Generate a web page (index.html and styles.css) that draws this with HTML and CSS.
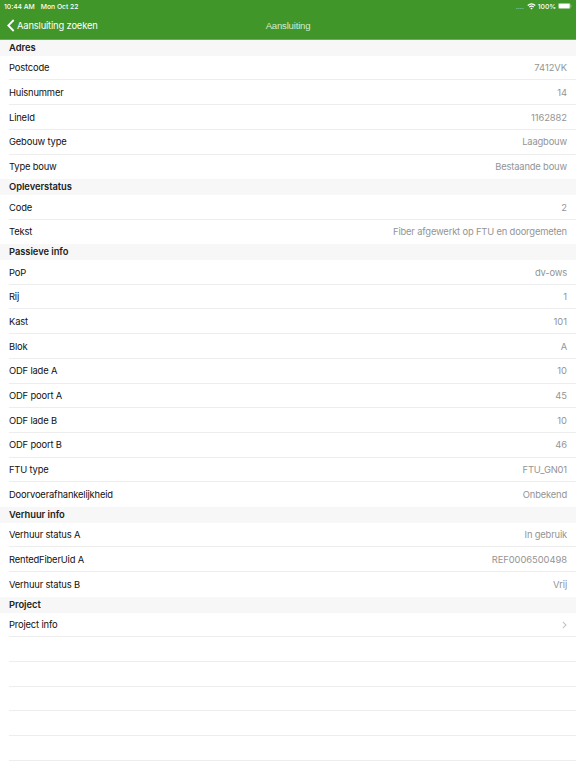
FILE: index.html
```html
<!DOCTYPE html>
<html lang="nl"><head><meta charset="utf-8"><title>Aansluiting</title><link rel="stylesheet" href="styles.css"></head>
<body>
<header class="top">
<div class="status"><span class="time">10:44 AM</span><span class="date">Mon Oct 22</span><span class="dots">....</span>
<svg class="wifi" viewBox="0 0 9 7"><path d="M.7 2.5Q4.500-.9 8.300 2.500M2.200 4.100Q4.500 2.100 6.800 4.100" fill="none" stroke="#fff" stroke-width="1.200"/><path d="M3.300 5.200Q4.500 4.200 5.700 5.200L4.500 6.500z" fill="#fff"/></svg>
<span class="pct">100%</span><svg class="battery" viewBox="0 0 14 6"><rect x=".3" y=".3" width="11.900" height="5.400" rx="1.300" fill="none" stroke="#b9dcae" stroke-width=".6"/><rect x=".8" y=".7" width="10.900" height="4.600" rx=".8" fill="#fff"/><path d="M13 2q1 1 0 2z" fill="#b9dcae"/></svg></div>
<nav class="nav"><svg class="back" viewBox="0 0 8 13"><path d="M6.700 1L1.300 6.500L6.700 12" fill="none" stroke="#fff" stroke-width="1.800"/></svg><span class="back-label">Aansluiting zoeken</span><h1>Aansluiting</h1></nav>
</header>
<main>
<h2>Adres</h2>
<div class="row"><span>Postcode</span><b class="num">7412VK</b></div>
<div class="row"><span>Huisnummer</span><b class="num">14</b></div>
<div class="row"><span>LineId</span><b class="num">1162882</b></div>
<div class="row"><span>Gebouw type</span><b>Laagbouw</b></div>
<div class="row last"><span>Type bouw</span><b>Bestaande bouw</b></div>
<h2>Opleverstatus</h2>
<div class="row"><span>Code</span><b class="num">2</b></div>
<div class="row last"><span>Tekst</span><b>Fiber afgewerkt op FTU en doorgemeten</b></div>
<h2>Passieve info</h2>
<div class="row"><span>PoP</span><b>dv-ows</b></div>
<div class="row"><span>Rij</span><b class="num">1</b></div>
<div class="row"><span>Kast</span><b class="num">101</b></div>
<div class="row"><span>Blok</span><b>A</b></div>
<div class="row"><span>ODF lade A</span><b class="num">10</b></div>
<div class="row"><span>ODF poort A</span><b class="num">45</b></div>
<div class="row"><span>ODF lade B</span><b class="num">10</b></div>
<div class="row"><span>ODF poort B</span><b class="num">46</b></div>
<div class="row"><span>FTU type</span><b>FTU_GN01</b></div>
<div class="row last"><span>Doorvoerafhankelijkheid</span><b>Onbekend</b></div>
<h2>Verhuur info</h2>
<div class="row"><span>Verhuur status A</span><b>In gebruik</b></div>
<div class="row"><span>RentedFiberUid A</span><b class="num">REF0006500498</b></div>
<div class="row last"><span>Verhuur status B</span><b>Vrij</b></div>
<h2>Project</h2>
<div class="row"><span>Project info</span><svg class="chev" viewBox="0 0 5 8"><path d="M.8.8L4 4L.8 7.200" fill="none" stroke="#c4c4c8" stroke-width="1.100"/></svg></div>
<div class="row"></div><div class="row"></div><div class="row"></div><div class="row"></div><div class="row"></div><div class="row"></div>
</main></body></html>
```
FILE: styles.css
```css
* { box-sizing: border-box; }
body { margin: 0; height: 768px; overflow: hidden; background: #fff; color: #111; font-family: Inter, "Liberation Sans", sans-serif; font-size: 9.4px; letter-spacing: -.17px; }
.top { height: 40px; border-bottom: 1px solid #68af55; background: #409629; color: #fff; }
.status { display: flex; align-items: center; height: 12px; padding: 0 4px; font-size: 6.8px; font-weight: 500; letter-spacing: -.03px; }
.date { margin-left: 6px; }
.dots { margin-left: auto; opacity: .5; }
.wifi { width: 9px; height: 7px; margin: 0 2px 0 3px; }
.battery { width: 14px; height: 6px; margin-left: 2px; }
.nav { display: grid; grid-template-columns: 9px 1fr auto 9px 1fr; align-items: center; height: 27px; padding: 0 7px; }
.back { width: 8px; height: 13px; }
.back-label { padding-left: 1px; font-size: 9.4px; }
h1 { margin: 0; font-family: "Liberation Sans", sans-serif; font-size: 9.6px; font-weight: 400; letter-spacing: -.2px; color: #d5ebce; }
h2 { height: 15.75px; margin: 0; padding-left: 9px; background: #f7f7f7; color: #222; font-size: 9.4px; font-weight: 600; line-height: 16.5px; letter-spacing: -.05px; }
.row { display: flex; align-items: center; justify-content: space-between; height: 24.7px; margin-left: 9px; padding: .5px 9px 0 0; border-bottom: 1px solid #ededee; }
.last { border-bottom-color: transparent; }
.row b { color: #949494; font-weight: 400; }
.row .num { letter-spacing: -.05px; }
.chev { width: 5px; height: 8px; }
```
